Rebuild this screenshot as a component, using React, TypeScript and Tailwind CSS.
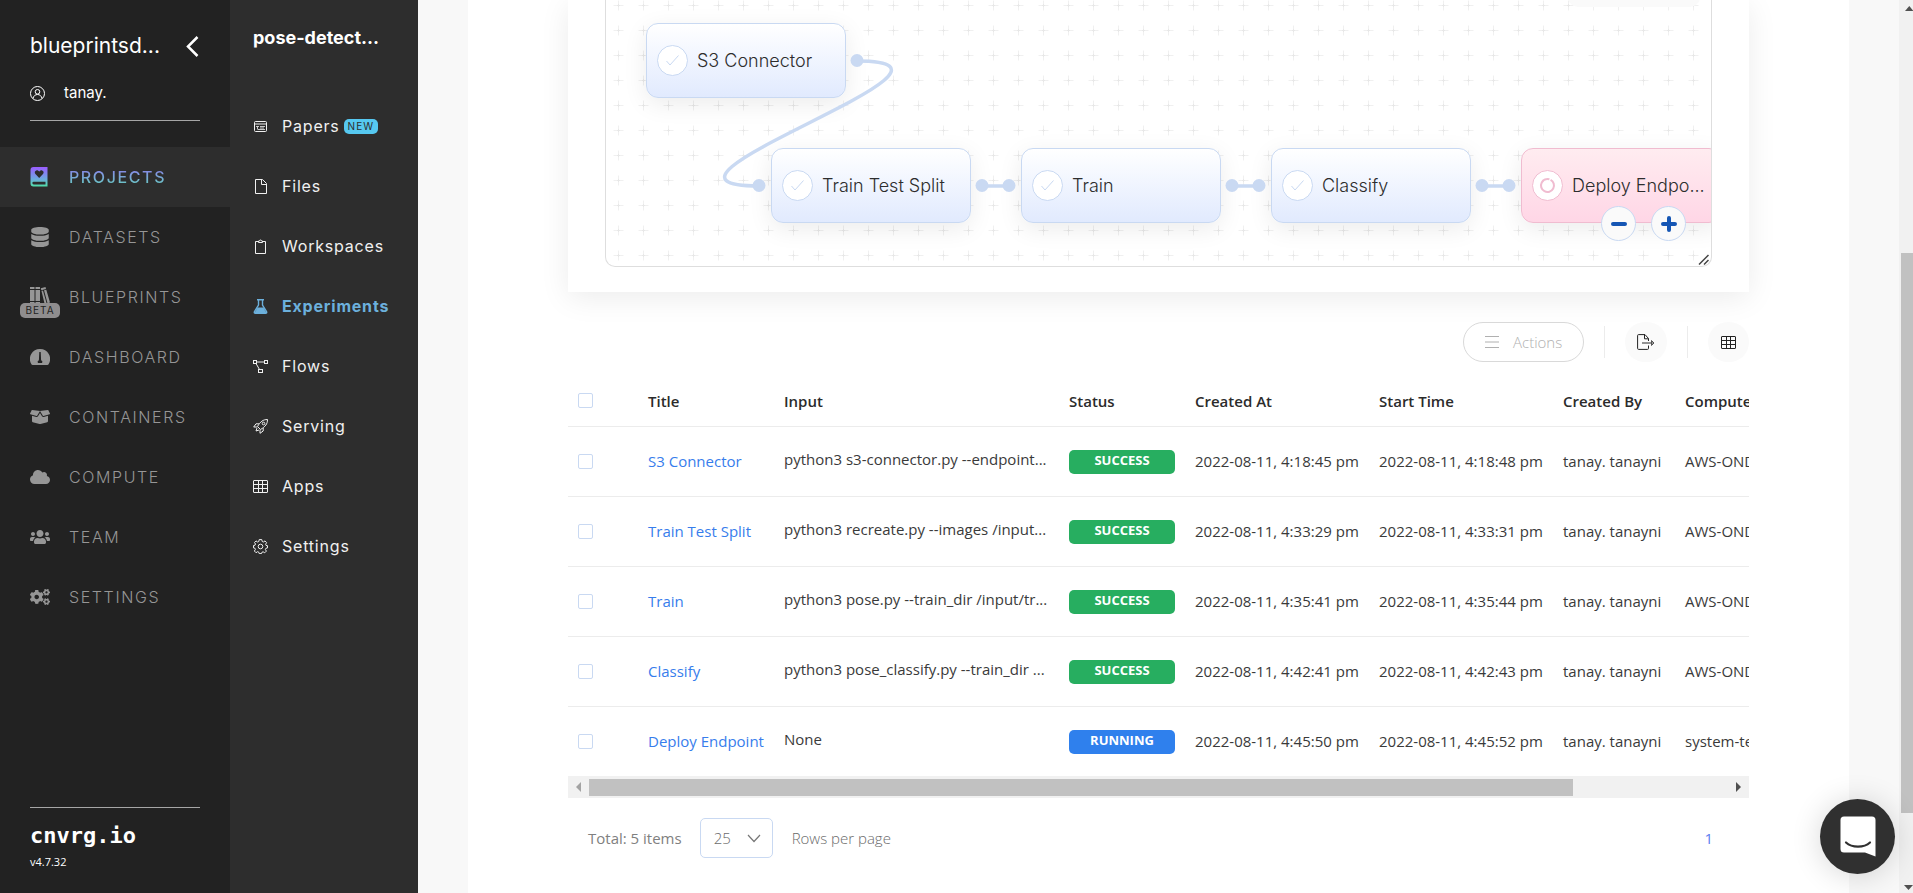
import type { ReactNode } from "react";
import { FaDatabase, FaBoxOpen, FaCloud, FaUsers, FaCogs } from "react-icons/fa";

type NavItem = { label: string; icon: ReactNode; active?: boolean; badge?: string };

function ProjectsIcon() {
  return (
    <svg width="18" height="20" viewBox="0 0 18 20" aria-hidden="true">
      <defs>
        <linearGradient id="book" x1="0" y1="0" x2="0" y2="1">
          <stop offset="0" stopColor="#9a5cff" />
          <stop offset="0.6" stopColor="#6fa8e0" />
          <stop offset="1" stopColor="#4fe0a8" />
        </linearGradient>
      </defs>
      <path fill="url(#book)" fillRule="evenodd" d="M3.500 0H17.500V19.500H3.500A3 3 0 0 1 .5 16.500V3A3 3 0 0 1 3.500 0ZM3.700 14.700A1.200 1.200 0 0 0 3.700 17.400H15.500V14.700ZM9.200 11L13 7C14.200 5.500 13.500 3.700 12 3.400C10.800 3.200 9.800 3.800 9.200 4.800C8.600 3.800 7.600 3.200 6.400 3.400C4.900 3.700 4.200 5.500 5.400 7Z" />
    </svg>
  );
}

function BooksIcon() {
  return (
    <svg width="20" height="20" viewBox="0 0 20 20" fill="currentColor" aria-hidden="true">
      <path d="M0 0h4.500v2H0zM0 3h4.500v11H0zM0 15h4.500v3H0zM5.500 0H10v2H5.500zM5.500 3H10v11H5.500zM5.500 15H10v3H5.500zM10.800 1.300L15.500 0l.5 2-4.700 1.200zM11.500 4l1.500-.4L16.500 16l-2 .6zM14 3.300l2.300-.6L20 15.500l-2.500.8z" />
    </svg>
  );
}

function GaugeIcon() {
  return (
    <svg width="20" height="20" viewBox="0 0 20 20" aria-hidden="true">
      <path fill="currentColor" d="M10 2A10 10 0 0 0 1.400 17.200Q1.800 18 2.600 18H17.400Q18.200 18 18.600 17.200A10 10 0 0 0 10 2Z" />
      <path fill="#222222" d="M9.300 5h1.400l.4 8.200a2 2 0 0 1 1 2.800H7.900a2 2 0 0 1 1-2.800z" />
    </svg>
  );
}

function Line({ children }: { children: ReactNode }) {
  return (
    <svg width="15" height="15" viewBox="0 0 15 15" fill="none" stroke="currentColor" strokeWidth="1" aria-hidden="true">
      {children}
    </svg>
  );
}

function TableGlyph() {
  return (
    <Line>
      <rect x="0.5" y="1.500" width="14" height="12" rx="0.5" />
      <path d="M.5 5.500h14M.5 9.500h14M5.500 1.500v12M9.500 1.500v12" />
    </Line>
  );
}

const mainNav: NavItem[] = [
  { label: "PROJECTS", icon: <ProjectsIcon />, active: true },
  { label: "DATASETS", icon: <FaDatabase size={20} /> },
  { label: "BLUEPRINTS", icon: <BooksIcon />, badge: "BETA" },
  { label: "DASHBOARD", icon: <GaugeIcon /> },
  { label: "CONTAINERS", icon: <FaBoxOpen size={20} /> },
  { label: "COMPUTE", icon: <FaCloud size={20} /> },
  { label: "TEAM", icon: <FaUsers size={20} /> },
  { label: "SETTINGS", icon: <FaCogs size={20} /> },
];

const projectNav: NavItem[] = [
  {
    label: "Papers", badge: "NEW",
    icon: <Line><rect x="1.500" y="2.500" width="12" height="10" rx="1" /><path d="M1.500 5h12" /><path d="M3 7.500h3M4.500 7.500v3M7 7.500h5M5 10.500h7M7 9h4" strokeWidth=".8" /></Line>,
  },
  {
    label: "Files",
    icon: <Line><path d="M2.500.5h7l4 4v10h-11zM8.500.5v5h5" /></Line>,
  },
  {
    label: "Workspaces",
    icon: <Line><path d="M5 2.500H2.500v12h10v-12H10M5.500 3.500v-1.500h1a1 1 0 0 1 2 0h1v1.500z" /></Line>,
  },
  {
    label: "Experiments", active: true,
    icon: (
      <Line>
        <path d="M4 .7h7M5.500 1v5L1.500 12.500q-.7 1.800 1 1.800h10q1.700 0 1-1.800L9.500 6V1" strokeWidth="1.400" />
        <path d="M4.500 9h6l2.500 5H2z" fill="currentColor" />
      </Line>
    ),
  },
  {
    label: "Flows",
    icon: <Line><rect x=".5" y="1.500" width="3" height="3" /><rect x="11.500" y="1.500" width="3" height="3" /><rect x="5.500" y="10.500" width="4" height="3" /><path d="M3.500 3h8M3 4.500l3.500 6" /></Line>,
  },
  {
    label: "Serving",
    icon: <Line><path d="M14.500.5C10 .5 7.500 2.500 4.500 7.500L7.500 10.500C12.500 7.500 14.500 5 14.500.5ZM6 4.800H3L.7 8h3.500M10.200 9v3L7 14.300v-3.500M4 9l-1 3 3-1" /><circle cx="10.500" cy="4.500" r="1.300" /></Line>,
  },
  { label: "Apps", icon: <TableGlyph /> },
  {
    label: "Settings",
    icon: (
      <Line>
        <path d="M6.200.6h2.600l.4 1.900 1.200.5L12 1.900 13.600 3.700l-1 1.500.4 1.200 1.500.3v2.200l-1.600.4-.5 1.200 1 1.600-1.700 1.700-1.600-1-1.200.5-.4 1.300H6.200l-.4-1.400-1.200-.5-1.600 1L1.400 12l1-1.600-.5-1.200-1.400-.3V6.500l1.500-.3.5-1.200-1-1.500L3 1.900 4.600 3l1.200-.5z" />
        <circle cx="7.500" cy="7.500" r="2.300" />
      </Line>
    ),
  },
];

type FlowNode = { label: string; x: number; y: number; running?: boolean };

const flowNodes: FlowNode[] = [
  { label: "S3 Connector", x: 40, y: 23 },
  { label: "Train Test Split", x: 165, y: 148 },
  { label: "Train", x: 415, y: 148 },
  { label: "Classify", x: 665, y: 148 },
  { label: "Deploy Endpo...", x: 915, y: 148, running: true },
];

const rows = [
  { title: "S3 Connector", input: "python3 s3-connector.py --endpoint...", status: "SUCCESS", created: "2022-08-11, 4:18:45 pm", start: "2022-08-11, 4:18:48 pm", compute: "AWS-ONDEMAND" },
  { title: "Train Test Split", input: "python3 recreate.py --images /input...", status: "SUCCESS", created: "2022-08-11, 4:33:29 pm", start: "2022-08-11, 4:33:31 pm", compute: "AWS-ONDEMAND" },
  { title: "Train", input: "python3 pose.py --train_dir /input/tr...", status: "SUCCESS", created: "2022-08-11, 4:35:41 pm", start: "2022-08-11, 4:35:44 pm", compute: "AWS-ONDEMAND" },
  { title: "Classify", input: "python3 pose_classify.py --train_dir ...", status: "SUCCESS", created: "2022-08-11, 4:42:41 pm", start: "2022-08-11, 4:42:43 pm", compute: "AWS-ONDEMAND" },
  { title: "Deploy Endpoint", input: "None", status: "RUNNING", created: "2022-08-11, 4:45:50 pm", start: "2022-08-11, 4:45:52 pm", compute: "system-template" },
];

function MainSidebar() {
  return (
    <aside className="flex w-[230px] shrink-0 flex-col bg-[#222222]">
      <div className="mx-[30px] h-[121px] border-b border-[#a6a6a6]">
        <div className="flex items-center justify-between pt-[30px] text-white">
          <span className="text-[21px] leading-8">blueprintsd...</span>
          <button aria-label="Collapse menu" className="pr-px">
            <svg width="13" height="21" viewBox="0 0 13 21" fill="none" stroke="currentColor" strokeWidth="2.500" aria-hidden="true">
              <path d="M11.500 1L2 10.500l9.500 9.500" />
            </svg>
          </button>
        </div>
        <div className="flex items-center gap-[19px] pt-[19px] text-[15px] leading-6 text-white">
          <Line>
            <circle cx="7.500" cy="7.500" r="7" />
            <circle cx="7.500" cy="5.800" r="2.300" />
            <path d="M3 12.500c.5-2.500 2.200-4 4.500-4s4 1.500 4.500 4" />
          </Line>
          tanay.
        </div>
      </div>
      <nav className="mt-[26px] flex flex-col">
        {mainNav.map((item) => (
          <a
            key={item.label}
            href="#"
            className={
              item.active
                ? "flex h-[60px] items-center bg-[#2d2d2d] pl-[30px] text-base tracking-widest"
                : "flex h-[60px] items-center pl-[30px] text-base font-light tracking-widest text-[#969696]"
            }
          >
            <span className="relative flex w-[39px]">
              {item.icon}
              {item.badge && (
                <span className="absolute top-4 -left-2.5 w-10 rounded-[5px] bg-[#8f8d8e] text-center text-[10px] leading-[15px] font-normal tracking-widest text-[#222222]">
                  {item.badge}
                </span>
              )}
            </span>
            {item.active ? (
              <span className="bg-linear-to-b from-[#8c6cf0] to-[#55d8b4] bg-clip-text font-medium text-transparent">{item.label}</span>
            ) : (
              item.label
            )}
          </a>
        ))}
      </nav>
      <div className="mx-[30px] mt-auto h-[86px] border-t border-[#a6a6a6] pt-3 text-white">
        <div className="font-['DejaVu_Sans_Mono',monospace] text-[22px] leading-8 font-bold">cnvrg.io</div>
        <div className="pt-0.5 font-['Open_Sans',sans-serif] text-[11px] leading-4">v4.7.32</div>
      </div>
    </aside>
  );
}

function ProjectSidebar() {
  return (
    <aside className="flex w-[188px] shrink-0 flex-col bg-[#2d2d2d] px-[23px]">
      <div className="pt-6 text-lg leading-7 font-bold text-white">pose-detect...</div>
      <nav className="mt-11 flex flex-col">
        {projectNav.map((item) => (
          <a
            key={item.label}
            href="#"
            className={
              item.active
                ? "flex h-[60px] items-center gap-3.5 text-base font-bold tracking-wider text-[#6cb0dc]"
                : "flex h-[60px] items-center gap-3.5 text-base font-normal tracking-wider text-[#f0f0f0]"
            }
          >
            {item.icon}
            <span>{item.label}</span>
            {item.badge && (
              <span className="-ml-2.5 rounded-[5px] bg-[#56c8f0] px-1 text-[10px] leading-[15px] tracking-widest text-[#2d2d2d]">{item.badge}</span>
            )}
          </a>
        ))}
      </nav>
    </aside>
  );
}

function FlowCanvas() {
  return (
    <section className="bg-white px-[37px] pb-[25px] font-[Inter,sans-serif] shadow-[0_6px_28px_rgba(0,0,0,0.08)]">
      <div className="relative h-[267px] overflow-hidden rounded-b-[10px] border border-t-0 border-[#dedede]">
        <svg className="absolute inset-0" width="100%" height="100%" aria-hidden="true">
          <defs>
            <pattern id="crosses" x="0" y="-7" width="25" height="25" patternUnits="userSpaceOnUse">
              <path d="M7.500 12.500h10M12.500 7.500v10" stroke="#f0f0f0" strokeWidth="1" />
              <path d="M11 12.500h3M12.500 11v3" stroke="#e8e8e8" strokeWidth="1" />
            </pattern>
          </defs>
          <rect width="100%" height="100%" fill="url(#crosses)" />
        </svg>
        <div className="absolute -top-6 right-[11px] h-[31px] w-[132px] rounded-[10px] bg-[#fafafa]" />
        {flowNodes.map((n) => (
          <div
            key={n.label}
            style={{ left: n.x, top: n.y }}
            className={
              n.running
                ? "absolute flex h-[75px] w-[200px] items-center rounded-xl border border-[#f0bcd0] bg-linear-to-b from-[#ffecf0] to-[#ffd6e6] pl-2.5 shadow-[0_6px_24px_rgba(0,0,0,0.08)]"
                : "absolute flex h-[75px] w-[200px] items-center rounded-xl border border-[#c9d9f2] bg-linear-to-b from-white to-[#e1eafe] pl-2.5 shadow-[0_6px_24px_rgba(0,0,0,0.08)]"
            }
          >
            <svg width="31" height="31" viewBox="0 0 31 31" fill="none" stroke={n.running ? "#f0bcd0" : "#c9d9f2"} aria-hidden="true">
              <circle cx="15.500" cy="15.500" r="15" fill="#fff" />
              {n.running ? (
                <circle cx="15.500" cy="15.500" r="6.500" strokeWidth="2" strokeDasharray="38.500 2.340" transform="rotate(-62 15.500 15.500)" />
              ) : (
                <path d="M9.500 16l3.500 4 8.500-9.500" />
              )}
            </svg>
            <span className="pl-[9px] text-lg font-light whitespace-nowrap text-[#2d2d2d]">{n.label}</span>
          </div>
        ))}
        <svg className="absolute inset-0" width="100%" height="100%" fill="none" stroke="#c9d9f2" strokeWidth="3.500" aria-hidden="true">
          <path d="M251 61C401 61 3 186 153 186" />
          <path d="M376 186h27M626 186h27M876 186h27" />
          <g fill="#c9d9f2" stroke="none">
            <circle cx="251" cy="60.500" r="6.500" />
            <circle cx="153" cy="185.500" r="6.500" />
            <circle cx="376" cy="185.500" r="6.500" />
            <circle cx="403" cy="185.500" r="6.500" />
            <circle cx="626" cy="185.500" r="6.500" />
            <circle cx="653" cy="185.500" r="6.500" />
            <circle cx="876" cy="185.500" r="6.500" />
            <circle cx="903" cy="185.500" r="6.500" />
          </g>
        </svg>
        <div className="absolute right-[25px] bottom-[25px] flex gap-[15px]">
          <button aria-label="Zoom out" className="flex size-[35px] items-center justify-center rounded-full border border-[#c9d9f2] bg-[#fafafa]">
            <span className="h-1 w-4 rounded-sm bg-[#1556b4]" />
          </button>
          <button aria-label="Zoom in" className="flex size-[35px] items-center justify-center rounded-full border border-[#c9d9f2] bg-[#fafafa]">
            <svg width="16" height="16" viewBox="0 0 16 16" stroke="#1556b4" strokeWidth="4" strokeLinecap="round" aria-hidden="true">
              <path d="M2 8h12M8 2v12" />
            </svg>
          </button>
        </div>
        <svg className="absolute right-0.5 bottom-px" width="11" height="11" viewBox="0 0 11 11" stroke="#444" strokeWidth="1.500" aria-hidden="true">
          <path d="M1 10.500L10.500 1M6 10.500L10.500 6" />
        </svg>
      </div>
    </section>
  );
}

function Toolbar() {
  return (
    <div className="mt-[30px] flex h-10 items-center justify-end">
      <button className="flex h-10 w-[121px] items-center gap-3.5 rounded-full border border-[#d9d9d9] pl-[21px] text-[15px] font-light text-[#b0b0b0]">
        <svg width="14" height="12" viewBox="0 0 14 12" stroke="currentColor" aria-hidden="true">
          <path d="M0 .5h14M0 6h14M0 11.500h14" />
        </svg>
        Actions
      </button>
      <span className="ml-5 h-8 w-px bg-[#ececec]" />
      <button aria-label="Export" className="ml-5 flex h-10 w-[42px] items-center justify-center rounded-full bg-[#fafafa] text-[#222]">
        <svg width="18" height="16" viewBox="0 0 18 16" fill="none" stroke="currentColor" aria-hidden="true">
          <path d="M11.500 7V4.500L8 .6H1.500Q.6 .6 .6 1.600v12.800q0 1 1 1h8.900q1 0 1-1V11.500M7.500.6V4.800H11.500" />
          <path d="M5 9h9" stroke="#777" strokeWidth="1.600" />
          <path d="M14.500 6.500L17 9 14.500 11.500z" fill="#999" stroke="#555" />
        </svg>
      </button>
      <span className="ml-5 h-8 w-px bg-[#ececec]" />
      <button aria-label="Columns" className="ml-5 flex h-10 w-[41px] items-center justify-center rounded-full bg-[#fafafa] text-[#222]">
        <TableGlyph />
      </button>
    </div>
  );
}

function Check({ label }: { label: string }) {
  return <input type="checkbox" aria-label={label} className="block size-[15px] appearance-none rounded-xs border border-[#c9d9f2] bg-white" />;
}

function ExperimentsTable() {
  return (
    <div className="mt-3.5 overflow-hidden">
      <table className="w-[1400px] table-fixed border-collapse text-left text-[15px] leading-5 text-[#3a3a3a]">
        <colgroup>
          <col className="w-[80px]" />
          <col className="w-[136px]" />
          <col className="w-[285px]" />
          <col className="w-[126px]" />
          <col className="w-[184px]" />
          <col className="w-[184px]" />
          <col className="w-[122px]" />
          <col />
        </colgroup>
        <thead>
          <tr className="h-[50px] border-b border-[#ececec] text-[#2b2b2b]">
            <th className="pl-2.5"><Check label="Select all" /></th>
            {["Title", "Input", "Status", "Created At", "Start Time", "Created By", "Compute"].map((h) => (
              <th key={h} className="font-semibold">{h}</th>
            ))}
          </tr>
        </thead>
        <tbody className="font-normal">
          {rows.map((r) => (
            <tr key={r.title} className="h-[70px] border-b border-[#ececec] whitespace-nowrap last:border-0">
              <td className="pl-2.5"><Check label={"Select " + r.title} /></td>
              <td><a href="#" className="text-[#377dec]">{r.title}</a></td>
              <td className="pb-1">{r.input}</td>
              <td className="pt-0.5">
                <span
                  className={
                    r.status === "RUNNING"
                      ? "block h-6 w-[106px] rounded-[5px] bg-[#2f80ed] text-center text-[13px] leading-[21px] font-bold text-white"
                      : "block h-6 w-[106px] rounded-[5px] bg-[#27ae60] text-center text-[13px] leading-[21px] font-bold text-white"
                  }
                >
                  {r.status}
                </span>
              </td>
              <td>{r.created}</td>
              <td>{r.start}</td>
              <td>tanay. tanayni</td>
              <td>{r.compute}</td>
            </tr>
          ))}
        </tbody>
      </table>
      <div className="flex h-[22px] items-center bg-[#f1f1f1]">
        <svg className="ml-1.5 w-[15px] shrink-0" width="15" height="10" viewBox="0 0 15 10" fill="#a3a3a3" aria-hidden="true"><path d="M7 0v10L2 5z" /></svg>
        <div className="h-[17px] w-5/6 bg-[#c1c1c1]" />
        <svg className="mr-1.5 ml-auto" width="8" height="10" viewBox="0 0 8 10" fill="#505050" aria-hidden="true"><path d="M1 0v10l5-5z" /></svg>
      </div>
    </div>
  );
}

function Pagination() {
  return (
    <footer className="flex items-center pt-5 pr-9 pl-5 text-[15px] text-[#808080]">
      <span>Total: 5 items</span>
      <label className="ml-[18px] flex items-center gap-[19px] font-light text-[#6b6b6b]">
        <span className="relative flex items-center">
          <select defaultValue="25" className="h-10 w-[73px] appearance-none rounded-[5px] border border-[#c9d9f2] bg-white pl-[13px]">
            <option>25</option>
          </select>
          <svg className="pointer-events-none absolute right-3" width="14" height="9" viewBox="0 0 14 9" fill="none" stroke="#777" strokeWidth="1.200" aria-hidden="true">
            <path d="M1 1l6 6.500L13 1" />
          </svg>
        </span>
        Rows per page
      </label>
      <a href="#" className="ml-auto text-[#5b7cf0]">1</a>
    </footer>
  );
}

function PageScrollbar() {
  return (
    <div className="flex w-3.5 shrink-0 flex-col bg-[#f1f1f1]" aria-hidden="true">
      <svg className="mt-1.5 ml-1.5" width="8" height="5" viewBox="0 0 8 5" fill="#505050"><path d="M0 5h8.500L4.300 0z" /></svg>
      <div className="mt-[242px] ml-0.5 h-[560px] bg-[#c1c1c1]" />
      <svg className="mt-auto mb-[3px] ml-1" width="10" height="5" viewBox="0 0 10 5" fill="#505050"><path d="M1 0h9L5.500 5z" /></svg>
    </div>
  );
}

export default function App() {
  return (
    <div className="flex h-screen overflow-hidden bg-[#f8f8f8] font-[Inter,sans-serif]">
      <MainSidebar />
      <ProjectSidebar />
      <main className="mx-[50px] min-w-0 flex-1 overflow-hidden bg-white px-[100px] font-['Open_Sans',sans-serif]">
        <FlowCanvas />
        <Toolbar />
        <ExperimentsTable />
        <Pagination />
      </main>
      <PageScrollbar />
      <button aria-label="Open chat" className="fixed right-[18px] bottom-[19px] flex size-[75px] items-center justify-center rounded-full bg-[#303030] shadow-[0_2px_30px_rgba(0,0,0,0.16)]">
        <svg width="36" height="41" viewBox="0 0 36 41" aria-hidden="true">
          <path fill="#fff" d="M4 0.500H32Q35.500.5 35.500 4V40.500L25 36.500H4Q.5 36.500 .5 33V4Q.5.5 4 .5Z" />
          <path d="M6 26.500C12 32 24 32 30 26.500" fill="none" stroke="#303030" strokeWidth="2.200" strokeLinecap="round" />
        </svg>
      </button>
    </div>
  );
}
